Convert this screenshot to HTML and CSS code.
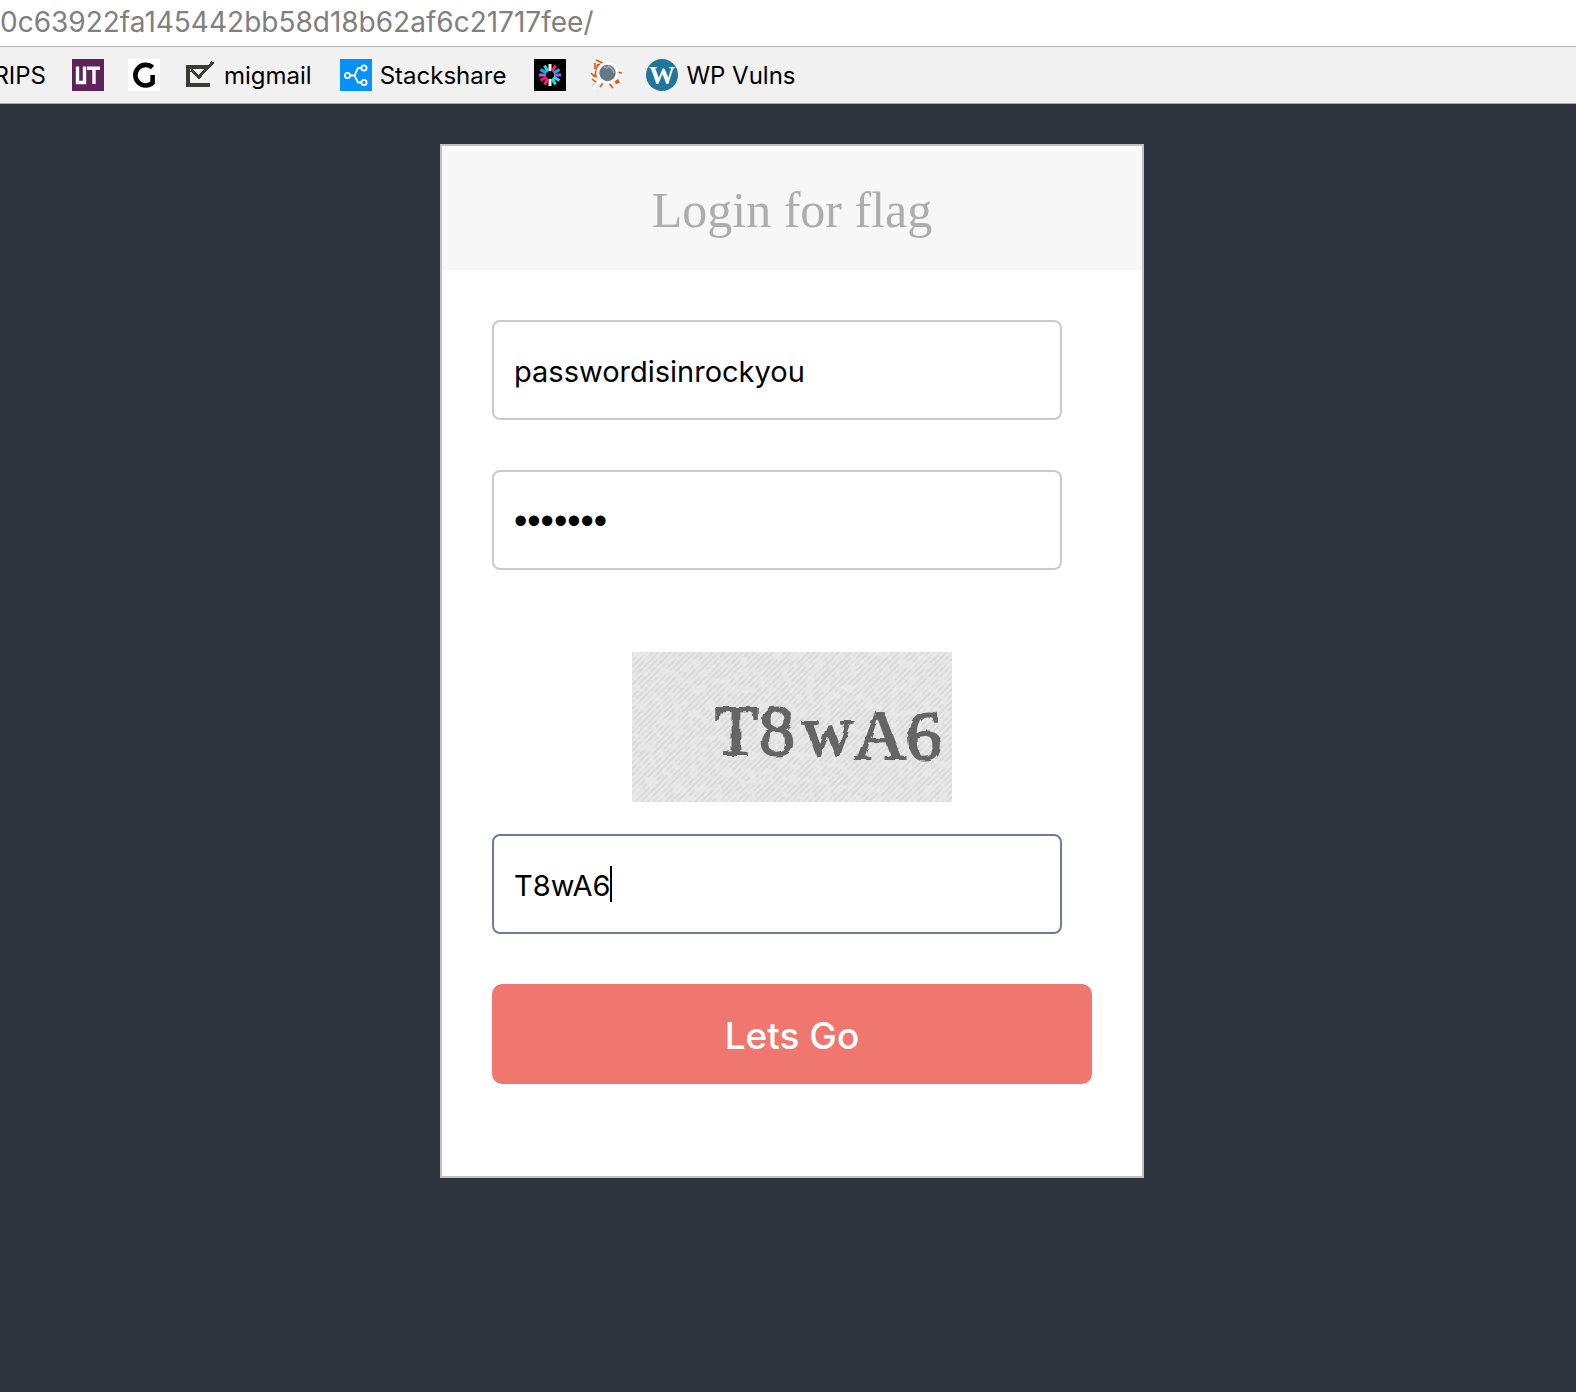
FILE: index.html
```html
<!DOCTYPE html>
<html lang="en">
<head>
<meta charset="utf-8">
<meta name="viewport" content="width=device-width, initial-scale=1">
<title>Login for flag</title>
<link rel="stylesheet" href="styles.css">
</head>
<body>
<header class="browser">
  <div class="address">0c63922fa145442bb58d18b62af6c21717fee/</div>
  <nav class="bookmarks" aria-label="Bookmarks">
    <a class="bookmark bookmark-cut" href="#"><span class="label">RIPS</span></a>
    <a class="bookmark" href="#" aria-label="UT">
      <svg class="icon" viewBox="0 0 32 32"><path fill="#5e2358" d="M0 0h32v32H0z"/><path fill="none" stroke="#fff" stroke-width="3.4" d="M5.5 7.5v16h7v-16M15 9.2h13M22 9v16"/></svg>
    </a>
    <a class="bookmark" href="#" aria-label="G">
      <svg class="icon" viewBox="0 0 32 32"><path fill="#fff" d="M0 0h32v32H0z"/><path fill="none" stroke="#050505" stroke-width="4.6" d="M24.500 8.500A10.300 10.300 0 1 0 24.600 23.800V16"/></svg>
    </a>
    <a class="bookmark" href="#">
      <svg class="icon" viewBox="0 0 32 32" shape-rendering="crispEdges"><path fill="#3b3a36" d="M2 6h22v4H6v14h20v4H2z"/><path fill="none" stroke="#3b3a36" stroke-width="3" d="M7 11l8 7L29 3"/></svg>
      <span class="label">migmail</span>
    </a>
    <a class="bookmark" href="#">
      <svg class="icon" viewBox="0 0 32 32"><path fill="#0690fa" d="M0 0h32v32H0z"/><g fill="none" stroke="#fff" stroke-width="1.800"><circle cx="7.500" cy="16.500" r="2.600"/><circle cx="24" cy="9" r="2.600"/><circle cx="24" cy="23.500" r="2.600"/><path d="M10 16.500h4.500L18 9h3.400M14.500 16.500l3.500 7h3.400"/></g></svg>
      <span class="label">Stackshare</span>
    </a>
    <a class="bookmark" href="#" aria-label="Burst">
      <svg class="icon" viewBox="0 0 32 32"><path d="M0 0h32v32H0z"/><g stroke-width="3"><path stroke="#fff" d="M16 5v7M16 20v7"/><path stroke="#ff1f68" d="M21.500 6.500l-3.500 6M10.500 25.500l3.500-6"/><path stroke="#12b5e8" d="M25.500 10.500l-6 3.500M6.500 10.500l6 3.500"/><path stroke="#c052f2" d="M5 16h7M20 16h7"/><path stroke="#f51a5d" d="M6.500 21.500l6-3.500"/><path stroke="#20e0e0" d="M25.500 21.500l-6-3.500M10.500 6.500l3.500 6M21.500 25.500l-3.500-6"/></g></svg>
    </a>
    <a class="bookmark" href="#" aria-label="Bug search">
      <svg class="icon" viewBox="0 0 32 32"><g fill="none" stroke="#db590f" stroke-width="1.600"><path d="M6 1l7 3M5 4v6M1 14l3 3 5 1M2 20l5 4-4 3M18 23l5 6M27 13l5 1M13 24l-3 4"/></g><path fill="#db590f" d="M5 13l2-8 8-1-6 8 1 8-6-3zM24 22l4-2 2 4-4 1z"/><path stroke="#fff" stroke-width="3.500" d="M10 22l-7 7"/><circle cx="17.500" cy="14" r="9.700" fill="#647986" stroke="#fff" stroke-width="3"/><path fill="none" stroke="#a7b7c1" stroke-width="1.200" d="M14 8l3 1 2-2 4 4 1 3"/></svg>
    </a>
    <a class="bookmark" href="#">
      <svg class="icon" viewBox="0 0 32 32"><circle cx="16" cy="16" r="16" fill="#21759b"/><text class="w-mark" x="16" y="25" text-anchor="middle">W</text></svg>
      <span class="label">WP Vulns</span>
    </a>
  </nav>
</header>
<main class="page">
  <form class="card">
    <h1 class="title">Login for flag</h1>
    <div class="fields">
      <input class="field" type="text" aria-label="Username" value="passwordisinrockyou">
      <input class="field field-password" type="password" aria-label="Password" value="letmein">
      <svg class="captcha" viewBox="0 0 320 150" role="img" aria-label="Captcha">
        <defs>
          <pattern id="hatch" width="6" height="6" patternUnits="userSpaceOnUse"><path stroke="#eaeaea" stroke-width="1.700" d="M-1 7L7-1M-1 1L1-1M5 7L7 5"/></pattern>
          <filter id="grain" x="0" y="0" width="100%" height="100%"><feTurbulence type="fractalNoise" baseFrequency=".12" numOctaves="2" seed="8"/><feColorMatrix values="0 0 0 0 .83  0 0 0 0 .83  0 0 0 0 .83  6 0 0 0 -2.900"/></filter>
          <filter id="rough"><feTurbulence type="fractalNoise" baseFrequency=".09" numOctaves="2" seed="3"/><feDisplacementMap in="SourceGraphic" scale="5"/></filter>
        </defs>
        <path fill="#dadada" d="M0 0h320v150H0z"/>
        <path fill="url(#hatch)" d="M0 0h320v150H0z"/>
        <path filter="url(#grain)" opacity=".7" d="M0 0h320v150H0z"/>
        <g class="captcha-text" filter="url(#rough)">
          <text x="82" y="103">T</text><text x="127" y="103">8</text><text x="170" y="103">w</text><text x="222" y="107">A</text><text x="274" y="108">6</text>
        </g>
      </svg>
      <div class="code">
        <input class="field field-active" type="text" aria-label="Captcha text" value="T8wA6">
        <span class="caret"></span>
      </div>
      <button class="submit" type="button">Lets Go</button>
    </div>
  </form>
</main>
</body>
</html>
```
FILE: styles.css
```css
* { box-sizing: border-box; }
body {
  margin: 0;
  min-height: 100vh;
  background: #2d343e;
  font-family: Inter, "Liberation Sans", sans-serif;
  color: #000;
}
.browser { background: #f1f1f1; border-bottom: 1px solid #a9abad; }
.address {
  height: 47px;
  overflow: hidden;
  background: #fff;
  border-bottom: 1px solid #b3b3b3;
  color: #808080;
  font-size: 28px;
  line-height: 44px;
  white-space: nowrap;
}
.bookmarks {
  display: flex;
  align-items: center;
  gap: 24px;
  height: 56px;
  overflow: hidden;
}
.bookmark {
  display: flex;
  flex: none;
  align-items: center;
  gap: 8px;
  color: inherit;
  font-size: 24px;
  line-height: 32px;
  text-decoration: none;
  white-space: nowrap;
}
.bookmark-cut { width: 50px; justify-content: flex-end; margin-right: -2px; }
.label { padding: 2px 4px 0 0; }
.icon { display: block; width: 32px; height: 32px; }
.w-mark { font: bold 26px "Liberation Serif", serif; fill: #fff; }
.page { padding: 40px 24px 40px 32px; }
.card {
  max-width: 704px;
  margin: 0 auto;
  padding-top: 4px;
  background: #fff;
  border: 2px solid #c1c1c1;
}
.title {
  margin: 0;
  padding: 30px 0;
  background: #f7f7f7;
  color: #adadad;
  font: 50px/60px "Liberation Serif", serif;
  text-align: center;
}
.fields { display: flex; flex-direction: column; padding: 50px 50px 92px; }
.field {
  display: block;
  width: 95%;
  height: 100px;
  margin: 0 0 50px;
  padding: 2px 20px 0;
  background: #fff;
  border: 2px solid #cacaca;
  border-radius: 8px;
  color: #000;
  font: 29px/36px Inter, "Liberation Sans", sans-serif;
  outline: 0;
}
.field-password { font: 38px/44px "Liberation Sans", sans-serif; }
.field-active { border-color: #6c7f95; }
.captcha {
  align-self: center;
  width: 320px;
  height: 150px;
  margin: 32px 0;
}
.captcha-text {
  font: 72px "Liberation Serif", serif;
  fill: #656565;
  stroke: #656565;
  stroke-width: 2px;
}
.code { position: relative; }
.caret {
  position: absolute;
  top: 32px;
  left: 118px;
  width: 2px;
  height: 36px;
  background: #000;
}
.submit {
  height: 100px;
  padding: 4px 0 0;
  background: #ef776f;
  border: 0;
  border-radius: 10px;
  color: #fff;
  font: 500 37px/48px Inter, "Liberation Sans", sans-serif;
}
```
